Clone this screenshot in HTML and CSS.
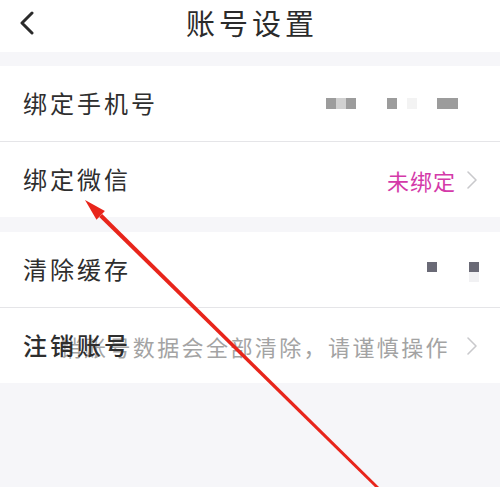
FILE: index.html
```html
<!DOCTYPE html>
<html lang="zh">
<head>
<meta charset="utf-8">
<link rel="stylesheet" href="styles.css">
</head>
<body>
<div class="page">
  <header class="header">
    <svg class="back" width="16" height="24" viewBox="0 0 16 24"><path d="M13 2 L3 12 L13 22" fill="none" stroke="#2b2b2b" stroke-width="3" stroke-linecap="round" stroke-linejoin="round"/></svg>
    <h1 class="title">账号设置</h1>
  </header>
  <div class="gap first"></div>
  <section class="group">
    <div class="row">
      <span class="label">绑定手机号</span>
      <span class="blur">
        <i class="b b1"></i><i class="b b2"></i><i class="b b1"></i>
        <i class="b b1 sp"></i><i class="b b3"></i><i class="b b4"></i>
      </span>
    </div>
    <div class="sep"></div>
    <div class="row">
      <span class="label">绑定微信</span>
      <span class="right"><span class="pink">未绑定</span><svg class="chev" width="12" height="20" viewBox="0 0 12 20"><path d="M2 2 L10 10 L2 18" fill="none" stroke="#c9c9cc" stroke-width="1.6" stroke-linecap="round" stroke-linejoin="round"/></svg></span>
    </div>
  </section>
  <div class="gap"></div>
  <section class="group">
    <div class="row">
      <span class="label">清除缓存</span>
      <span class="cache"><i class="sq"></i><i class="sq sq2"></i></span>
    </div>
    <div class="sep"></div>
    <div class="row row-last">
      <span class="label">注销账号</span>
      <span class="ghost">销账号数据会全部清除，请谨慎操作</span>
      <svg class="chev chev-last" width="12" height="20" viewBox="0 0 12 20"><path d="M2 2 L10 10 L2 18" fill="none" stroke="#c9c9cc" stroke-width="1.6" stroke-linecap="round" stroke-linejoin="round"/></svg>
    </div>
  </section>
  <svg class="arrow" width="500" height="487" viewBox="0 0 500 487">
    <polygon points="85,200 96.5,219.7 104.9,211.1" fill="#e8251b"/>
    <polygon points="99.2,216.9 102.2,213.9 380,488 378,490" fill="#e8251b"/>
  </svg>
</div>
</body>
</html>
```

FILE: styles.css
```css
* { box-sizing: border-box; margin: 0; padding: 0; }
html, body { width: 500px; height: 487px; overflow: hidden; }
body {
  background: #f6f6f9;
  font-family: "Noto Sans CJK SC", "Noto Sans", sans-serif;
  color: #2e2e2e;
}
.page { position: relative; width: 500px; height: 487px; }
.header {
  height: 52px;
  background: #fff;
  display: flex;
  align-items: center;
  justify-content: center;
  position: relative;
}
.back { position: absolute; left: 19px; top: 11px; }
.title {
  font-size: 29px;
  font-weight: 400;
  letter-spacing: 4px;
  margin-left: 4px;
  line-height: 1;
  margin-top: -8px;
  color: #2b2b2b;
}
.gap { height: 15px; }
.gap.first { height: 14px; }
.group { background: #fff; }
.row {
  height: 75px;
  display: flex;
  align-items: center;
  padding: 0 22px 0 23px;
  position: relative;
}
.sep { height: 1px; background: #e5e5e8; }
.label {
  font-size: 24px;
  letter-spacing: 3px;
  line-height: 1;
  color: #2e2e2e;
  margin-top: -1px;
}
.blur {
  margin-left: auto;
  display: flex;
  align-items: flex-start;
  height: 11px;
  margin-right: 20px;
}
.b { display: block; width: 10px; height: 11px; }
.b1 { background: #9c9c9c; }
.b2 { background: #d0d0d0; }
.b3 { background: #f3f3f3; margin-left: 10px; }
.b4 { background: #9c9c9c; width: 21px; margin-left: 20px; }
.sp { margin-left: 31px; }
.right { margin-left: auto; display: flex; align-items: center; }
.pink {
  color: #d43aa9;
  font-size: 22px;
  letter-spacing: 1px;
  line-height: 1;
  margin-right: 10px;
}
.chev { display: block; }
.cache { margin-left: auto; display: flex; align-items: flex-start; margin-right: -1px; margin-top: -6px; }
.sq { display: block; width: 10px; height: 10px; background: #6a6a76; }
.sq2 { margin-left: 32px; box-shadow: 0 10px 0 0 #f1f1f3; }
.row-last .ghost {
  position: absolute;
  right: 50px;
  top: 50%;
  transform: translateY(-50%);
  font-size: 22px;
  letter-spacing: 2.4px;
  color: #9a9a9a;
  opacity: 0.9;
  line-height: 1;
  white-space: nowrap;
}
.row-last .label { position: relative; z-index: 1; font-weight: 500; }
.chev-last { margin-left: auto; }
.arrow { position: absolute; left: 0; top: 0; pointer-events: none; }
```
